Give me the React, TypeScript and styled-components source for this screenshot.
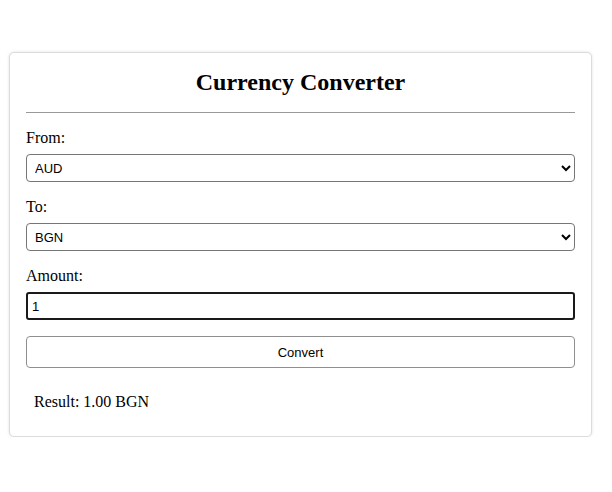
import React, { useState } from "react";
import styled, { createGlobalStyle } from "styled-components";

const Global = createGlobalStyle`
  html, body { margin: 0; padding: 0; background: #ffffff; }
  body { font-family: "Liberation Serif", "Times New Roman", serif; color: #000; }
`;

const Page = styled.div`
  padding: 52px 20px 0 9px;
`;

const Card = styled.div`
  border: 1px solid #dcdcdc;
  border-radius: 5px;
  box-shadow: 0 0 3px rgba(0, 0, 0, 0.12);
  padding: 16px 16px 17px;
  background: #fff;
`;

const Title = styled.h2`
  margin: 0;
  text-align: center;
  font-size: 24px;
  font-weight: bold;
  line-height: 27px;
`;

const Rule = styled.hr`
  margin: 16px 0 0;
  border: none;
  border-top: 1px solid #999;
  height: 0;
`;

const Field = styled.div`
  display: flex;
  flex-direction: column;
  margin-top: 16px;
`;

const Label = styled.label`
  font-size: 16px;
  line-height: 18px;
  margin-bottom: 7px;
`;

const Select = styled.select`
  font-family: "Liberation Sans", Arial, sans-serif;
  font-size: 13px;
  height: 28px;
  padding: 0 4px;
  border: 1px solid #767676;
  border-radius: 4px;
  background: #fff;
  color: #000;
`;

const Input = styled.input`
  font-family: "Liberation Sans", Arial, sans-serif;
  font-size: 13px;
  height: 28px;
  box-sizing: border-box;
  padding: 0 4px;
  border: 2px solid #1a1a1a;
  border-radius: 3px;
  outline: none;
  color: #000;
`;

const Button = styled.button`
  margin-top: 16px;
  width: 100%;
  height: 32px;
  font-family: "Liberation Sans", Arial, sans-serif;
  font-size: 13px;
  color: #000;
  background: #fff;
  border: 1px solid #8f8f8f;
  border-radius: 4px;
`;

const Result = styled.div`
  margin-top: 17px;
  padding: 8px;
  font-size: 16px;
  line-height: 18px;
`;

export default function App() {
  const [from, setFrom] = useState("AUD");
  const [to, setTo] = useState("BGN");
  const [amount, setAmount] = useState("1");
  const currencies = ["AUD", "BGN", "BRL", "CAD", "CHF", "CNY", "EUR", "GBP", "USD"];
  return (
    <>
      <Global />
      <Page>
        <Card>
          <Title>Currency Converter</Title>
          <Rule />
          <Field>
            <Label>From:</Label>
            <Select value={from} onChange={(e) => setFrom(e.target.value)}>
              {currencies.map((c) => (
                <option key={c}>{c}</option>
              ))}
            </Select>
          </Field>
          <Field>
            <Label>To:</Label>
            <Select value={to} onChange={(e) => setTo(e.target.value)}>
              {currencies.map((c) => (
                <option key={c}>{c}</option>
              ))}
            </Select>
          </Field>
          <Field>
            <Label>Amount:</Label>
            <Input value={amount} onChange={(e) => setAmount(e.target.value)} />
          </Field>
          <Button>Convert</Button>
          <Result>Result: 1.00 BGN</Result>
        </Card>
      </Page>
    </>
  );
}
